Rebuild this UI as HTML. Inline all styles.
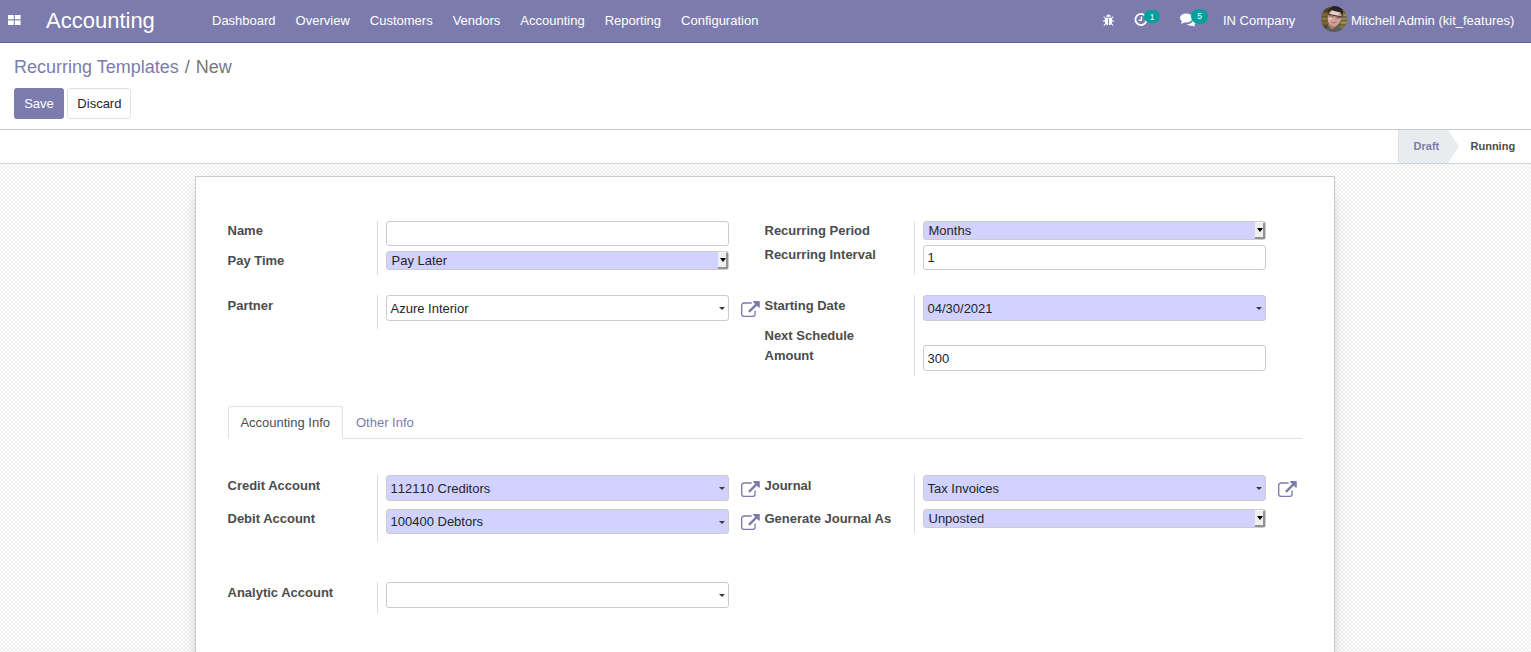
<!DOCTYPE html>
<html lang="en">
<head>
<meta charset="utf-8">
<title>Odoo - Recurring Templates</title>
<style>
*{box-sizing:border-box;}
html,body{margin:0;padding:0;}
body{width:1531px;height:652px;overflow:hidden;font-family:"Liberation Sans",Arial,sans-serif;font-size:13px;line-height:1.5;color:#4c4c4c;background:#fff;position:relative;}
a{text-decoration:none;color:#7c7bad;}
/* ---------- navbar ---------- */
.navbar{position:absolute;left:0;top:0;width:1531px;height:43px;background:#7c7bad;border-bottom:1px solid #5f5e97;color:#fff;}
.navbar .apps{position:absolute;left:8px;top:15px;width:13px;height:11px;}
.navbar .brand{position:absolute;left:46px;top:0;height:42px;line-height:42px;font-size:22px;color:#fff;}
.navbar .menu{position:absolute;left:202px;top:0;height:42px;display:flex;}
.navbar .menu span{display:block;padding:0 10px;line-height:42px;font-size:13px;color:#fff;}
.navbar .systray{position:absolute;right:0;top:0;height:42px;}
.navbar .systray .it{position:absolute;top:0;height:42px;line-height:40px;font-size:13px;white-space:nowrap;color:#fff;}
.badge{position:absolute;background:#00a09d;color:#fff;font-size:8.500px;line-height:14px;height:13px;border-radius:7px;text-align:center;padding:0 4px;}
.avatar{position:absolute;left:1321px;top:6px;width:26px;height:26px;}
.navbar .ic{position:absolute;}
.navbar .it{position:absolute;top:0;height:42px;line-height:42px;font-size:13px;white-space:nowrap;color:#fff;}
/* ---------- control panel ---------- */
.cp{position:absolute;left:0;top:43px;width:1531px;height:87px;background:#fff;border-bottom:1px solid #ccc;}
.crumb{position:absolute;left:14px;top:11px;font-size:18px;line-height:27px;color:#777;white-space:nowrap;}
.crumb a{color:#7c7bad;}
.crumb .sep{padding:0 6px;color:#6c757d;}
.btn{position:absolute;top:45px;height:31px;line-height:29px;border:1px solid transparent;border-radius:3px;font-size:13px;text-align:center;padding:0;}
.btn.save{left:14px;width:50px;border-radius:2.500px;background:#7c7bad;border-color:#7c7bad;color:#fff;}
.btn.discard{left:67px;width:64px;padding-left:.800px;background:#fff;border-color:#dee2e6;color:#212529;}
/* ---------- statusbar ---------- */
.sb{position:absolute;left:0;top:130px;width:1531px;height:34px;background:#fff;border-bottom:1px solid #ced4da;}
.sb svg{position:absolute;left:1398px;top:0;}
.sb .st{position:absolute;top:0;height:33px;line-height:32px;font-size:11px;font-weight:bold;white-space:nowrap;}
/* ---------- content ---------- */
.content{position:absolute;left:0;top:164px;width:1531px;height:488px;overflow:hidden;
 background:repeating-conic-gradient(#eeeeee 0% 25%,#fff 0% 50%) 1px 1px/4px 4px;}
.sheet{position:absolute;left:195px;top:12px;width:1140px;height:600px;background:#fff;border:1px solid #c8c8d3;box-shadow:0 5px 20px -15px #000;}
.lbl{position:absolute;margin-left:-0.5px;font-weight:bold;font-size:13px;line-height:20px;color:#4c4c4c;white-space:nowrap;}
.vsep{position:absolute;width:1px;background:#ddd;}
.inp{position:absolute;height:26px;border:1px solid #ccc;border-radius:3px;background:#fff;font-size:13px;line-height:24px;padding:0 4px 0 3.500px;color:#212529;white-space:nowrap;}
.inp.req{background:#d2d2ff;}
.sel{position:absolute;height:19px;border:1px solid #ccc;border-radius:3px;background:#d2d2ff;font-size:13px;line-height:17px;padding:0 5px 0 4.500px;color:#212529;white-space:nowrap;}
.caret{position:absolute;right:3px;top:11px;width:0;height:0;border-left:3px solid transparent;border-right:3px solid transparent;border-top:3px solid #3a3a3a;}
.ext{position:absolute;}
.sbtn{position:absolute;right:0;top:0;width:10px;height:17px;background:#efefef;border-right:2px solid #949494;border-bottom:2px solid #949494;border-top:1px solid #f8f8f8;}
.sbtn b{position:absolute;left:2px;top:5px;width:0;height:0;border-left:3px solid transparent;border-right:3px solid transparent;border-top:4px solid #000;}
.tabs{position:absolute;left:32px;top:229px;width:1074px;height:33px;border-bottom:1px solid #dee2e6;}
.tab{position:absolute;top:0;height:33px;line-height:32px;font-size:13px;padding:0 12px;white-space:nowrap;}
.tab.active{border:1px solid #dee2e6;border-bottom-color:#fff;border-radius:3px 3px 0 0;color:#495057;background:#fff;}
.tab.other{color:#7c7bad;}
</style>
</head>
<body>
<div class="navbar">
  <svg class="apps" viewBox="0 0 13 11"><rect x="0" y="0" width="5.800" height="4.300" fill="#fff"/><rect x="6.800" y="0" width="5.800" height="4.300" fill="#fff"/><rect x="0" y="5.400" width="5.800" height="4.600" fill="#fff"/><rect x="6.800" y="5.400" width="5.800" height="4.600" fill="#fff"/></svg>
  <div class="brand">Accounting</div>
  <div class="menu"><span>Dashboard</span><span>Overview</span><span>Customers</span><span>Vendors</span><span>Accounting</span><span>Reporting</span><span>Configuration</span></div>

  <svg class="ic" style="left:1102px;top:13.500px" width="13" height="13" viewBox="0 0 1792 1792"><path fill="#fff" d="M1696 960q0 26-19 45t-45 19h-224q0 171-67 290l208 209q19 19 19 45t-19 45q-18 19-45 19t-45-19l-198-197q-5 5-15 13t-42 28.500t-65 36.500-82 29-97 13v-896h-128v896q-51 0-101.500-13.500t-87-33-66-39-43.500-32.500l-15-14-183 207q-20 21-48 21-24 0-43-16-19-18-20.500-44.500t15.500-46.500l202-227q-58-114-58-274h-224q-26 0-45-19t-19-45 19-45 45-19h224v-294l-173-173q-19-19-19-45t19-45 45-19 45 19l173 173h844l173-173q19-19 45-19t45 19 19 45-19 45l-173 173v294h224q26 0 45 19t19 45zm-480-576h-640q0-133 93.500-226.500t226.500-93.500 226.500 93.500 93.500 226.500z"/></svg>
  <svg class="ic" style="left:1134px;top:13px" width="14" height="14" viewBox="0 0 14 14"><circle cx="7" cy="6.5" r="5.6" fill="none" stroke="#fff" stroke-width="1.8"/><path d="M7.4 3.4v4H4.6" fill="none" stroke="#fff" stroke-width="1.3"/></svg>
  <div class="badge" style="left:1144px;top:10px;width:16px;">1</div>
  <svg class="ic" style="left:1180px;top:13px" width="17" height="14" viewBox="0 0 17 14"><ellipse cx="6.2" cy="5" rx="6.2" ry="4.6" fill="#fff"/><path d="M2.2 7.5 L1 11 L5.5 9z" fill="#fff"/><path d="M13 6.2c1.6.8 2.6 2 2.600 3.300 0 1-.5 1.800-1.300 2.500l.9 1.800-3-1.100c-2 .3-4.200-.2-5.400-1.400 3.400-.1 6.300-2.100 6.200-5.100z" fill="#fff"/></svg>
  <div class="badge" style="left:1191px;top:9px;width:17px;height:15px;line-height:15px;border-radius:8px;font-size:8.500px;">5</div>
  <div class="it" style="left:1223px;">IN Company</div>
  <svg class="avatar" viewBox="0 0 26 26"><defs><clipPath id="av"><circle cx="13" cy="13" r="13"/></clipPath><filter id="bl" x="-10%" y="-10%" width="120%" height="120%"><feGaussianBlur stdDeviation="0.6"/></filter></defs><g clip-path="url(#av)"><rect width="26" height="26" fill="#76663a"/><g filter="url(#bl)"><rect x="-1" y="-1" width="9" height="7" fill="#4e4022"/><rect x="-1" y="6.500" width="28" height=".8" fill="#55461f"/><rect x="-1" y="10.500" width="28" height=".8" fill="#55461f"/><rect x="-1" y="14.500" width="28" height=".8" fill="#55461f"/><rect x="-1" y="18.500" width="28" height=".8" fill="#55461f"/><rect x="20" y="7.500" width="6" height="2.800" fill="#998a52"/><rect x="19" y="11.500" width="7" height="2.800" fill="#8f8150"/><rect x="20" y="15.500" width="6" height="2.800" fill="#998a52"/><rect x="0" y="11.500" width="5" height="2.800" fill="#83744a"/><rect x="17" y="19.500" width="7" height="3" fill="#877848"/><path d="M0 27c0-4 2-7 6-8.500l5-1 6 2c3 1 4 3.500 4 7.500z" fill="#5c605c"/><path d="M2 21c1.500-1.500 3-2 5-2.500l-1 4-4 2z" fill="#4a4638"/><path d="M7 19l3.500 4.500 5-3-.5-3.500h-7z" fill="#a97868"/><g transform="rotate(12 13 13)"><ellipse cx="13.200" cy="11.800" rx="6.800" ry="8.600" fill="#cfa294"/><ellipse cx="12.500" cy="7.500" rx="4.200" ry="2.600" fill="#ead2ca"/><ellipse cx="9.500" cy="13.500" rx="2" ry="3" fill="#e3c0b4"/><path d="M5.800 9.500c-1-6.500 2.800-9.800 7.800-9.800s8.600 3.500 6.800 10.800c-.5-3-1-4.800-2.400-5.800-3 .8-7.500.6-9.500-.2-1.400 1.300-2.200 3-2.700 5z" fill="#27242a"/><rect x="6.200" y="9" width="14" height="1.100" fill="#39302f"/><rect x="7.200" y="9.800" width="5" height="2.300" rx="1" fill="#8c6a62" opacity=".75"/><rect x="14.200" y="9.800" width="5" height="2.300" rx="1" fill="#8c6a62" opacity=".75"/><path d="M9.500 15c2 2.800 5.500 2.800 7.500 0-1.800.5-5.800.5-7.500 0z" fill="#9a4a52"/><path d="M10.300 15.300c1.700 1.200 4.300 1.200 6 0-1.500.3-4.500.3-6 0z" fill="#fff"/></g></g></g></svg>
  <div class="it" style="left:1351px;">Mitchell Admin (kit_features)</div>
</div>
<div class="cp">
  <div class="crumb"><a>Recurring Templates</a><span class="sep">/</span><span>New</span></div>
  <div class="btn save">Save</div>
  <div class="btn discard">Discard</div>
</div>
<div class="sb">
  <svg width="133" height="33" viewBox="0 0 133 33"><polygon points="0,0 50,0 61,16.5 50,33 0,33" fill="#e9ecef"/><line x1="0.5" y1="0" x2="0.5" y2="33" stroke="#dee2e6"/></svg>
  <div class="st" style="left:1413.600px;color:#7c7bad;">Draft</div>
  <div class="st" style="left:1470.500px;color:#4c4c4c;">Running</div>
</div>
<div class="content">
  <div class="sheet" id="sheet">
    <div class="lbl" style="left:32px;top:44px">Name</div>
    <div class="lbl" style="left:32px;top:74px">Pay Time</div>
    <div class="vsep" style="left:181px;top:44px;height:54px"></div>
    <div class="inp" style="left:190px;top:44px;width:343px;height:25px;line-height:24px"></div>
    <div class="sel" style="left:190px;top:74px;width:343px">Pay Later<i class="sbtn"><b></b></i></div>
    <div class="lbl" style="left:32px;top:119px">Partner</div>
    <div class="vsep" style="left:181px;top:118px;height:34px"></div>
    <div class="inp" style="left:190px;top:118px;width:343px;height:26px;line-height:25px">Azure Interior<i class="caret"></i></div>
    <svg class="ext" style="left:545.000px;top:124.000px" width="18.8" height="16.11" viewBox="0 0 1792 1536"><path fill="#7c7bad" d="M1408 928v320q0 119-84.500 203.500t-203.500 84.500h-832q-119 0-203.500-84.500t-84.500-203.500v-832q0-119 84.500-203.500t203.500-84.500h704q14 0 23 9t9 23v64q0 14-9 23t-23 9h-704q-66 0-113 47t-47 113v832q0 66 47 113t113 47h832q66 0 113-47t47-113v-320q0-14 9-23t23-9h64q14 0 23 9t9 23zm384-864v512q0 26-19 45t-45 19-45-19l-176-176-652 652q-10 10-23 10t-23-10l-114-114q-10-10-10-23t10-23l652-652-176-176q-19-19-19-45t19-45 45-19h512q26 0 45 19t19 45z"/></svg>
    <div class="lbl" style="left:569px;top:44px">Recurring Period</div>
    <div class="lbl" style="left:569px;top:68px">Recurring Interval</div>
    <div class="vsep" style="left:718px;top:44px;height:54px"></div>
    <div class="sel" style="left:727px;top:44px;width:343px">Months<i class="sbtn"><b></b></i></div>
    <div class="inp" style="left:727px;top:68px;width:343px;height:25px;line-height:24px">1</div>
    <div class="lbl" style="left:569px;top:119px">Starting Date</div>
    <div class="lbl" style="left:569px;top:149px">Next Schedule</div>
    <div class="lbl" style="left:569px;top:169px">Amount</div>
    <div class="vsep" style="left:718px;top:118px;height:81px"></div>
    <div class="inp req" style="left:727px;top:118px;width:343px;height:26px;line-height:25px">04/30/2021<i class="caret"></i></div>
    <div class="inp" style="left:727px;top:168px;width:343px;height:26px;line-height:25px">300</div>
    <div class="tabs"><div class="tab active" style="left:0;width:115px;padding-left:11.400px">Accounting Info</div><div class="tab other" style="left:116px;top:1px">Other Info</div></div>
    <div class="lbl" style="left:32px;top:299px">Credit Account</div>
    <div class="lbl" style="left:32px;top:332px">Debit Account</div>
    <div class="vsep" style="left:181px;top:298px;height:67px"></div>
    <div class="inp req" style="left:190px;top:298px;width:343px;height:26px;line-height:25px"><span style="font-kerning:none">112110</span> Creditors<i class="caret"></i></div>
    <svg class="ext" style="left:545.000px;top:304.000px" width="18.8" height="16.11" viewBox="0 0 1792 1536"><path fill="#7c7bad" d="M1408 928v320q0 119-84.500 203.500t-203.500 84.500h-832q-119 0-203.500-84.500t-84.500-203.500v-832q0-119 84.500-203.500t203.500-84.500h704q14 0 23 9t9 23v64q0 14-9 23t-23 9h-704q-66 0-113 47t-47 113v832q0 66 47 113t113 47h832q66 0 113-47t47-113v-320q0-14 9-23t23-9h64q14 0 23 9t9 23zm384-864v512q0 26-19 45t-45 19-45-19l-176-176-652 652q-10 10-23 10t-23-10l-114-114q-10-10-10-23t10-23l652-652-176-176q-19-19-19-45t19-45 45-19h512q26 0 45 19t19 45z"/></svg>
    <div class="inp req" style="left:190px;top:332px;width:343px;height:25px;line-height:24px">100400 Debtors<i class="caret"></i></div>
    <svg class="ext" style="left:545.000px;top:337.000px" width="18.8" height="16.11" viewBox="0 0 1792 1536"><path fill="#7c7bad" d="M1408 928v320q0 119-84.500 203.500t-203.500 84.500h-832q-119 0-203.500-84.500t-84.500-203.500v-832q0-119 84.500-203.500t203.500-84.500h704q14 0 23 9t9 23v64q0 14-9 23t-23 9h-704q-66 0-113 47t-47 113v832q0 66 47 113t113 47h832q66 0 113-47t47-113v-320q0-14 9-23t23-9h64q14 0 23 9t9 23zm384-864v512q0 26-19 45t-45 19-45-19l-176-176-652 652q-10 10-23 10t-23-10l-114-114q-10-10-10-23t10-23l652-652-176-176q-19-19-19-45t19-45 45-19h512q26 0 45 19t19 45z"/></svg>
    <div class="lbl" style="left:569px;top:299px">Journal</div>
    <div class="lbl" style="left:569px;top:332px">Generate Journal As</div>
    <div class="vsep" style="left:718px;top:298px;height:58px"></div>
    <div class="inp req" style="left:727px;top:298px;width:343px;height:26px;line-height:25px">Tax Invoices<i class="caret"></i></div>
    <svg class="ext" style="left:1082.000px;top:304.000px" width="18.8" height="16.11" viewBox="0 0 1792 1536"><path fill="#7c7bad" d="M1408 928v320q0 119-84.500 203.500t-203.500 84.500h-832q-119 0-203.500-84.500t-84.500-203.500v-832q0-119 84.500-203.500t203.500-84.500h704q14 0 23 9t9 23v64q0 14-9 23t-23 9h-704q-66 0-113 47t-47 113v832q0 66 47 113t113 47h832q66 0 113-47t47-113v-320q0-14 9-23t23-9h64q14 0 23 9t9 23zm384-864v512q0 26-19 45t-45 19-45-19l-176-176-652 652q-10 10-23 10t-23-10l-114-114q-10-10-10-23t10-23l652-652-176-176q-19-19-19-45t19-45 45-19h512q26 0 45 19t19 45z"/></svg>
    <div class="sel" style="left:727px;top:332px;width:343px">Unposted<i class="sbtn"><b></b></i></div>
    <div class="lbl" style="left:32px;top:406px">Analytic Account</div>
    <div class="vsep" style="left:181px;top:405px;height:31px"></div>
    <div class="inp" style="left:190px;top:405px;width:343px;height:26px;line-height:25px"><i class="caret"></i></div>
  </div>
</div>
</body>
</html>
